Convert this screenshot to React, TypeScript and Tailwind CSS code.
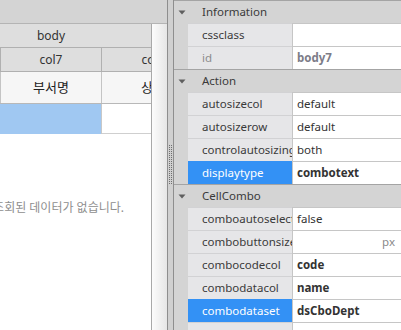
import React from "react";

type Row =
  | { kind: "cat"; label: string }
  | {
      kind: "prop";
      name: string;
      value?: string;
      bold?: boolean;
      readonly?: boolean;
      selected?: boolean;
      unit?: string;
    };

const ROWS: Row[] = [
  { kind: "cat", label: "Information" },
  { kind: "prop", name: "cssclass" },
  { kind: "prop", name: "id", value: "body7", bold: true, readonly: true },
  { kind: "cat", label: "Action" },
  { kind: "prop", name: "autosizecol", value: "default" },
  { kind: "prop", name: "autosizerow", value: "default" },
  { kind: "prop", name: "controlautosizing", value: "both" },
  { kind: "prop", name: "displaytype", value: "combotext", bold: true, selected: true },
  { kind: "cat", label: "CellCombo" },
  { kind: "prop", name: "comboautoselect", value: "false" },
  { kind: "prop", name: "combobuttonsize", unit: "px" },
  { kind: "prop", name: "combocodecol", value: "code", bold: true },
  { kind: "prop", name: "combodatacol", value: "name", bold: true },
  { kind: "prop", name: "combodataset", value: "dsCboDept", bold: true, selected: true },
  { kind: "prop", name: "combodisplayrowcount", value: "" },
];

function Arrow() {
  return (
    <svg width="8" height="5" viewBox="0 0 8 5" className="block">
      <path d="M0.5 0.5 L7.5 0.5 L4 4.5 Z" fill="#5f5f5f" />
    </svg>
  );
}

function Grip() {
  const dots = [];
  for (let i = 0; i < 20; i++) {
    dots.push(<rect key={"a" + i} x="0" y={i * 2} width="1" height="1" fill="#6e6e6e" />);
    dots.push(<rect key={"b" + i} x="2" y={i * 2} width="1" height="1" fill="#6e6e6e" />);
  }
  return (
    <svg width="3" height="40" viewBox="0 0 3 40" className="block">
      {dots}
    </svg>
  );
}

function GridPanel() {
  return (
    <div className="w-[167px] shrink-0 flex flex-col">
      {/* title band */}
      <div className="h-[24px] bg-[#d4d4d4] border-b border-[#b4b4b4]" />
      <div className="flex flex-1">
        {/* grid body */}
        <div className="w-[152px] border-r border-[#a9a9a9] bg-white overflow-hidden flex flex-col text-[12px] text-[#333]">
          <div className="h-[24px] shrink-0 bg-[#dedede] border-b border-[#b0b0b0] flex">
            <div className="w-[102px] shrink-0 flex items-center justify-center">body</div>
          </div>
          <div className="h-[24px] shrink-0 bg-[#dedede] border-b border-[#b0b0b0] flex">
            <div className="w-[102px] shrink-0 border-l border-r border-[#b0b0b0] flex items-center justify-center">
              col7
            </div>
            <div className="w-[102px] shrink-0 flex items-center justify-center">col8</div>
          </div>
          <div className="h-[32px] shrink-0 bg-[#f6f6f6] border-b border-[#b8b8b8] flex text-[13px] text-[#222]">
            <div className="w-[102px] shrink-0 border-l border-r border-[#c4c4c4] flex items-center justify-center">
              부서명
            </div>
            <div className="w-[102px] shrink-0 flex items-center justify-center">상태</div>
          </div>
          <div className="h-[30px] shrink-0 flex">
            <div className="w-[102px] shrink-0 bg-[#a0c8f2] border-r border-[#c8c8c8]" />
            <div className="w-[50px] shrink-0 border-b border-[#cfcfcf]" />
          </div>
          <div className="mt-[66px] h-[16px] w-[124px] flex justify-end overflow-hidden">
            <span className="whitespace-nowrap text-[12px] leading-[16px] text-[#8e8e8e]">
              조회된 데이터가 없습니다.
            </span>
          </div>
        </div>
        {/* scroll strip */}
        <div className="w-[15px] bg-gradient-to-r from-[#fcfcfc] to-[#e6e6e6]" />
      </div>
    </div>
  );
}

function PropertyPanel() {
  return (
    <div className="flex-1 bg-[#d4d4d4] flex flex-col overflow-hidden text-[11.5px] text-[#3a3a3a]">
      {ROWS.map((r, i) => {
        if (r.kind === "cat") {
          return (
            <div key={i} className="h-[23px] shrink-0 flex items-center border-t border-[#a4a4a4]">
              <div className="w-[14px] shrink-0 flex justify-center pl-[2px]">
                <Arrow />
              </div>
              <span className="pl-[14px]">{r.label}</span>
            </div>
          );
        }
        return (
          <div key={i} className="h-[23px] shrink-0 flex">
            <div className="w-[14px] shrink-0" />
            <div
              className={
                r.selected
                  ? "w-[104px] shrink-0 bg-[#3391f5] text-white border-t border-[#3391f5] pl-[14px] flex items-center overflow-hidden whitespace-nowrap"
                  : "w-[104px] shrink-0 bg-[#e6e6e8] border-t border-[#d2d2d4] pl-[14px] flex items-center overflow-hidden whitespace-nowrap " +
                    (r.readonly ? "text-[#8c8c8c]" : "")
              }
            >
              {r.name}
            </div>
            <div
              className={
                "flex-1 bg-white border-l border-t border-[#c6c6c6] pl-[4px] pr-[6px] flex items-center whitespace-nowrap overflow-hidden " +
                (r.bold ? "font-bold " : "") +
                (r.readonly ? "text-[#7c7c88]" : "text-[#333]")
              }
            >
              {r.value}
              {r.unit && <span className="ml-auto text-[#8a8a8a]">{r.unit}</span>}
            </div>
          </div>
        );
      })}
    </div>
  );
}

export default function App() {
  return (
    <div
      className="w-[401px] h-[330px] flex overflow-hidden bg-white"
      style={{ fontFamily: '"Noto Sans", "Noto Sans CJK KR", sans-serif' }}
    >
      <GridPanel />
      {/* splitter */}
      <div className="w-[7px] shrink-0 bg-[#d0d0d0] border-l border-r border-[#8e8e8e] flex items-center justify-center">
        <Grip />
      </div>
      <PropertyPanel />
    </div>
  );
}
